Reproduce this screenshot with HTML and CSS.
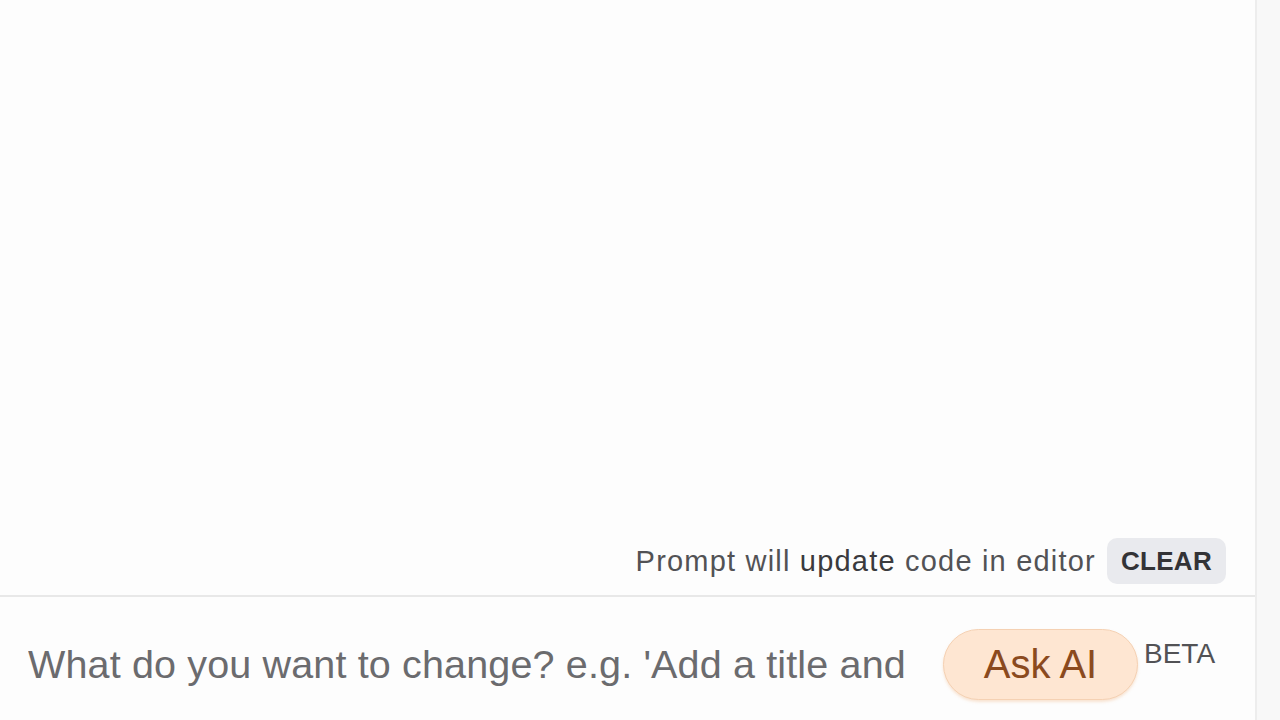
FILE: index.html
```html
<!DOCTYPE html>
<html lang="en">
<head>
    <meta charset="UTF-8">
    <meta name="viewport" content="width=device-width, initial-scale=1.0">
    <title>Ask AI</title>
    <link rel="stylesheet" href="styles.css">
</head>
<body>
    <div class="layout">
        <div class="main">
            <div class="preview"></div>
            <div class="status-row">
                <span class="status-text">Prompt will <b>update</b> code in editor</span>
                <button class="clear-btn" type="button">CLEAR</button>
            </div>
            <form class="prompt-row" id="promptForm">
                <input class="prompt-input" type="text" placeholder="What do you want to change? e.g. 'Add a title and description'">
                <button class="ask-btn" type="submit">Ask AI</button>
                <span class="beta">BETA</span>
            </form>
        </div>
        <div class="side"></div>
    </div>
</body>
</html>
```

FILE: styles.css
```css
:root {
    --page-bg: #fdfdfd;
    --side-bg: #f8f8f8;
    --line: #e8e8e8;
    --text: #525255;
    --text-strong: #3a3a3d;
    --chip-bg: #e9eaee;
    --ask-bg: #fee6d2;
    --ask-border: #f5d1b3;
    --ask-text: #8b4a1e;
}

body {
    margin: 0;
    padding: 0;
    background-color: var(--page-bg);
    font-family: "Liberation Sans", Arial, sans-serif;
    height: 100vh;
    overflow: hidden;
}

.layout {
    display: flex;
    height: 720px;
}

.main {
    width: 1255px;
    display: flex;
    flex-direction: column;
}

.side {
    flex: 1;
    background-color: var(--side-bg);
    border-left: 2px solid #ededed;
}

.preview {
    flex: 1;
}

.status-row {
    display: flex;
    justify-content: flex-end;
    align-items: center;
    gap: 11px;
    height: 46px;
    padding-right: 29px;
    margin-bottom: 11px;
}

.status-text {
    font-size: 29px;
    letter-spacing: 1.2px;
    color: var(--text);
}

.status-text b {
    font-weight: normal;
    color: var(--text-strong);
}

.clear-btn {
    height: 46px;
    padding: 0 14px;
    border: none;
    border-radius: 10px;
    background-color: var(--chip-bg);
    color: #333336;
    font-family: inherit;
    font-size: 26px;
    font-weight: bold;
    letter-spacing: 0.3px;
}

.prompt-row {
    display: flex;
    align-items: center;
    height: 111px;
    padding: 12px 0 0 28px;
    border-top: 2px solid var(--line);
    margin: 0;
}

.prompt-input {
    width: 878px;
    border: none;
    outline: none;
    background: transparent;
    padding: 0;
    font-family: inherit;
    font-size: 39.5px;
    letter-spacing: 0.15px;
    color: var(--text);
}

.prompt-input::placeholder {
    color: #6b6b6e;
}

.ask-btn {
    margin-left: 37px;
    width: 195px;
    height: 71px;
    border: 1px solid var(--ask-border);
    border-radius: 36px;
    background-color: var(--ask-bg);
    color: var(--ask-text);
    font-family: inherit;
    font-size: 40px;
    box-shadow: 0 2px 3px rgba(240, 180, 130, 0.35);
}

.beta {
    align-self: flex-start;
    margin: 29px 0 0 6px;
    font-size: 28px;
    color: var(--text);
}
```
